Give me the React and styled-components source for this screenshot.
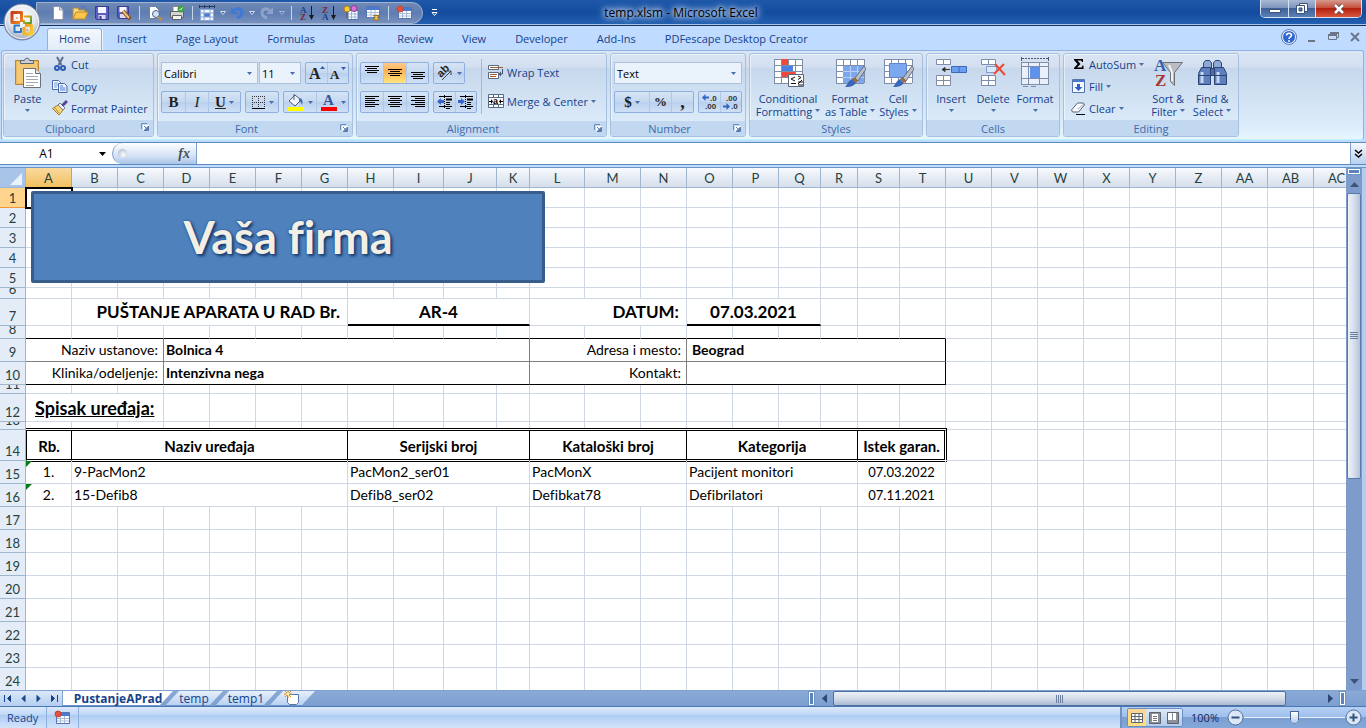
import React, { useState } from "react";
import styled, { createGlobalStyle, css } from "styled-components";

const GlobalStyle = createGlobalStyle`
    * { box-sizing: border-box; }
    html, body { margin: 0; padding: 0; overflow: hidden; }
    body { font-family: "Open Sans", "Noto Sans", sans-serif; font-size: 11px; color: #15428b; }
    button, select, input { font: inherit; color: inherit; margin: 0; padding: 0; border: 0; background: none; }
    button { cursor: pointer; }
`;

const COLS = [
    ["A", 46], ["B", 46], ["C", 46], ["D", 46], ["E", 46], ["F", 46], ["G", 46], ["H", 46],
    ["I", 50], ["J", 53], ["K", 33], ["L", 55], ["M", 56], ["N", 46], ["O", 46], ["P", 46],
    ["Q", 42], ["R", 37], ["S", 42], ["T", 46], ["U", 46], ["V", 46], ["W", 46], ["X", 46],
    ["Y", 46], ["Z", 46], ["AA", 46], ["AB", 46], ["AC", 46],
];

const ROW_HEIGHTS = [20, 20, 20, 20, 20, 11, 27, 13, 23, 23, 9, 28, 8, 31, 23, 23, 23, 23, 23, 23, 23, 23, 23, 23];

// row number -> cells that hold something; everything else is an empty cell
const CELLS = {
    7: [
        { at: 1, span: 6, text: "PUŠTANJE APARATA U RAD Br.", kind: "heading", align: "right" },
        { at: 7, span: 4, text: "AR-4", kind: "field", align: "center" },
        { at: 11, span: 3, text: "DATUM:", kind: "heading", align: "right" },
        { at: 14, span: 3, text: "07.03.2021", kind: "field", align: "center" },
    ],
    9: [
        { at: 0, span: 3, text: "Naziv ustanove:", kind: "label", align: "right" },
        { at: 3, span: 8, text: "Bolnica 4", kind: "value" },
        { at: 11, span: 3, text: "Adresa i mesto:", kind: "label", align: "right" },
        { at: 14, span: 6, text: "Beograd", kind: "value", indent: true, last: true },
    ],
    10: [
        { at: 0, span: 3, text: "Klinika/odeljenje:", kind: "label", align: "right" },
        { at: 3, span: 8, text: "Intenzivna nega", kind: "value" },
        { at: 11, span: 3, text: "Kontakt:", kind: "label", align: "right" },
        { at: 14, span: 6, text: "", kind: "value", indent: true, last: true },
    ],
    12: [{ at: 0, span: 3, text: "Spisak uređaja:", kind: "section" }],
    14: [
        { at: 0, span: 1, text: "Rb.", kind: "head", align: "center", first: true },
        { at: 1, span: 6, text: "Naziv uređaja", kind: "head", align: "center" },
        { at: 7, span: 4, text: "Serijski broj", kind: "head", align: "center" },
        { at: 11, span: 3, text: "Kataloški broj", kind: "head", align: "center" },
        { at: 14, span: 4, text: "Kategorija", kind: "head", align: "center" },
        { at: 18, span: 2, text: "Istek garan.", kind: "head", align: "center", last: true },
    ],
    15: [
        { at: 0, span: 1, text: "1.", kind: "data", align: "center", flag: true },
        { at: 1, span: 6, text: "9-PacMon2", kind: "data" },
        { at: 7, span: 4, text: "PacMon2_ser01", kind: "data" },
        { at: 11, span: 3, text: "PacMonX", kind: "data" },
        { at: 14, span: 4, text: "Pacijent monitori", kind: "data" },
        { at: 18, span: 2, text: "07.03.2022", kind: "date", align: "center" },
    ],
    16: [
        { at: 0, span: 1, text: "2.", kind: "data", align: "center", flag: true },
        { at: 1, span: 6, text: "15-Defib8", kind: "data" },
        { at: 7, span: 4, text: "Defib8_ser02", kind: "data" },
        { at: 11, span: 3, text: "Defibkat78", kind: "data" },
        { at: 14, span: 4, text: "Defibrilatori", kind: "data" },
        { at: 18, span: 2, text: "07.11.2021", kind: "date", align: "center" },
    ],
};

/* ---------- icons ---------- */

const Svg = ({ w = 16, h = 16, children }) => (
    <svg width={w} height={h} viewBox={`0 0 ${w} ${h}`} fill="none" aria-hidden="true">{children}</svg>
);

const Caret = ({ color = "#4a6ea9" }) => (
    <Svg w={5} h={3}><path d="M0 0h5L2.5 3z" fill={color} /></Svg>
);

const QuickCaret = () => (
    <Svg w={6} h={4}><path d="M.5 .5h5L3 3.500z" fill="#4a669a" stroke="#d3dff0" /></Svg>
);

const NewIcon = () => (
    <Svg><path d="M3.5 1.500h6l3.5 3.500v9.500h-9.500z" fill="#fff" stroke="#8a94a8" /><path d="M9.500 1.500v3.500h3.500" fill="#dfe6f0" stroke="#8a94a8" /></Svg>
);
const OpenIcon = () => (
    <Svg>
        <path d="M1 14V3h5l1 2h6v3" fill="#f5d98a" stroke="#b98a2b" />
        <path d="M1 14l3-7h12l-3 7z" fill="#ffc64a" stroke="#b98a2b" />
        <path d="M9 2c3-1.500 5 0 5 2" stroke="#3b6fc4" />
    </Svg>
);
const SaveIcon = () => (
    <Svg>
        <path d="M1.500 1.500h13v13h-12l-1-1z" fill="#5a5fc0" stroke="#373b91" />
        <path d="M4 2h8v6H4z" fill="#f6f7ff" /><path d="M4.500 10h7v4h-7z" fill="#d9dcf2" /><path d="M5.500 11h2v3h-2z" fill="#373b91" />
    </Svg>
);
const SaveAsIcon = () => (
    <Svg>
        <path d="M1.500 1.500h11v12h-10l-1-1z" fill="#5a5fc0" stroke="#373b91" />
        <path d="M3.500 2h7v5h-7z" fill="#f6f7ff" /><path d="M4 9h6v4H4z" fill="#d9dcf2" />
        <path d="M7 6l7 8" stroke="#7a4a12" strokeWidth="4" /><path d="M7 6l6 7" stroke="#f2c07a" strokeWidth="2" />
    </Svg>
);
const PreviewIcon = () => (
    <Svg>
        <path d="M2.500 1.500h6l3.500 3.500v8.500h-9.500z" fill="#fff" stroke="#6e7f9f" />
        <circle cx="9" cy="9" r="3.500" fill="#cfe2f7" stroke="#4b5f86" /><path d="M11.500 12l3 3" stroke="#d08a2a" strokeWidth="2" />
    </Svg>
);
const PrintIcon = () => (
    <Svg>
        <path d="M4 1.500h8v5H4z" fill="#fff" stroke="#888" />
        <path d="M1.500 6.500h13v6h-13z" fill="#d4d4cf" stroke="#5e6168" /><path d="M3.500 10.500h9v4h-9z" fill="#f3f3ee" stroke="#5e6168" />
        <circle cx="12" cy="4" r="3.500" fill="#3fa142" /><path d="M10.500 4l1 1 2-2.500" stroke="#fff" />
    </Svg>
);
const GridSizeIcon = () => (
    <Svg w={18}>
        <path d="M1 1.500h15M1.500 0v3M6.500 0v3M11.500 0v3M16.500 0v3" stroke="#25395f" />
        <path d="M2 4h14v12H2z" fill="#f4f8ff" /><path d="M6 8h6v4H6z" fill="#4a79cf" />
        <path d="M2 4.500h14M2 8h14M2 12h14M2 15.500h14M2.500 4v12M6 4v12M12 4v12M15.500 4v12" stroke="#8ba6d3" />
    </Svg>
);
const UndoIcon = ({ color = "#3f78d6", flip }) => (
    <Svg><g transform={flip ? "matrix(-1 0 0 1 16 0)" : undefined}>
        <path d="M5 6c4-4 8-2 8 2 0 3-2 4-5 5" stroke={color} strokeWidth="3" /><path d="M2 2v7h7z" fill={color} />
    </g></Svg>
);
const SortIcon = ({ top, bottom, topColor, bottomColor }) => (
    <Svg>
        <g fontFamily="Liberation Serif, serif" fontSize="9" fontWeight="bold">
            <text x="1" y="8" fill={topColor}>{top}</text><text x="1" y="15" fill={bottomColor}>{bottom}</text>
        </g>
        <path d="M12.500 1v11" stroke="#1b1b1b" /><path d="M10 10h5l-2.500 5z" fill="#1b1b1b" />
    </Svg>
);
const BalloonsIcon = () => (
    <Svg>
        <path d="M5 5.500h10v9H5z" fill="#fff" stroke="#5874ad" /><path d="M5 9h10M5 12h10M8.500 6v8M12 6v8" stroke="#9db3da" />
        <path d="M4 7v6" stroke="#555" /><circle cx="4" cy="4" r="3" fill="#ffca3a" stroke="#b17a12" /><circle cx="11" cy="3.500" r="3" fill="#d873d8" stroke="#8a3a94" />
    </Svg>
);
const TableIcon = () => (
    <Svg>
        <path d="M1.500 1.500h13v11h-13z" fill="#fff" stroke="#5874ad" /><path d="M1 2h14v3H1z" fill="#4a79cf" />
        <path d="M2 7.500h12M2 10h12M6 5v8M10 5v8" stroke="#a9bbdc" /><path d="M8.500 10.500h6l-2 2 2 2.500h-6l1.500-2.500z" fill="#f0c25a" stroke="#9a7220" />
    </Svg>
);
const RecordIcon = () => (
    <Svg>
        <path d="M2.500 2.500h13v11h-13z" fill="#fff" stroke="#5874ad" /><path d="M3 3h12v3H3z" fill="#4a79cf" />
        <path d="M3 8.500h12M3 11h12M6.500 6v7M10.500 6v7" stroke="#a9bbdc" /><circle cx="4" cy="4" r="3" fill="#e8503a" stroke="#c2452f" />
    </Svg>
);
const MoreIcon = () => (
    <Svg w={7} h={8}><path d="M1 .5h5" stroke="#fff" /><path d="M1 3.500h5L3.500 6.500z" stroke="#fff" /></Svg>
);
const OfficeLogo = () => (
    <Svg w={38} h={38}>
        <defs>
            <radialGradient id="orb" cx=".5" cy=".35" r=".65">
                <stop offset="0" stopColor="#fff" /><stop offset=".6" stopColor="#e1e5ec" /><stop offset="1" stopColor="#98a6bd" />
            </radialGradient>
            <linearGradient id="red" x1="0" y1="0" x2="1" y2="1"><stop stopColor="#c9381b" /><stop offset="1" stopColor="#f08a1c" /></linearGradient>
            <linearGradient id="green" x1="0" y1="0" x2="1" y2="1"><stop stopColor="#f2a51e" /><stop offset="1" stopColor="#4e9f2f" /></linearGradient>
            <linearGradient id="gold" x1="0" y1="0" x2="1" y2="1"><stop stopColor="#f39a1b" /><stop offset="1" stopColor="#f9cf2c" /></linearGradient>
        </defs>
        <circle cx="19" cy="19" r="18" fill="url(#orb)" stroke="#6d7f9f" /><circle cx="19" cy="19" r="16.500" stroke="#fff" strokeOpacity=".8" />
        <g strokeLinejoin="round">
            <path d="M17 19.500H9v-10h9.500V19" stroke="url(#red)" strokeWidth="3" />
            <path d="M21 13.500h7v6.500h-7v-3" stroke="url(#green)" strokeWidth="2" />
            <path d="M18 25v4h-6.500v-6.500H17" stroke="#2e78c9" strokeWidth="2" />
            <path d="M22 22.500h6.500V31H21v-7" stroke="url(#gold)" strokeWidth="3" />
        </g>
        <path d="M14 14v2M24 26v2" stroke="#e3762a" />
    </Svg>
);

const PasteIcon = () => (
    <Svg w={32} h={32}>
        <path d="M3.500 3.500h23v24h-23z" fill="#eab75d" stroke="#b5853a" /><path d="M5 5h20v21H5z" fill="#f3c877" />
        <path d="M8.500 6.500v-3h4c0-3 5-3 5 0h4v3z" fill="#c9ced6" stroke="#5c6470" />
        <path d="M11.500 11.500h12l5 5v14h-17z" fill="#fff" stroke="#68727f" /><path d="M23.500 11.500v5h5" fill="#e4e8ee" stroke="#68727f" />
        <path d="M14 16.500h7M14 19.500h12M14 22.500h12M14 25.500h12M14 28.500h8" stroke="#a4a9b0" />
    </Svg>
);
const CutIcon = () => (
    <Svg>
        <path d="M5 1l4.500 8M11 1L6.500 9" stroke="#5c6f8f" strokeWidth="2" />
        <circle cx="5" cy="12" r="2" stroke="#2c5cb4" strokeWidth="2" /><circle cx="11" cy="12" r="2" stroke="#2c5cb4" strokeWidth="2" />
    </Svg>
);
const CopyIcon = () => (
    <Svg>
        <path d="M.5 2.500h6l2 2v7h-8z" fill="#fff" stroke="#4569b0" /><path d="M2 5h4M2 7h5M2 9h3" stroke="#6f94d8" />
        <path d="M6.500 5.500h6l2.500 2.500v6.500H6.500z" fill="#eef4ff" stroke="#4569b0" /><path d="M8 8h3M8 10h5.500M8 12h5.500" stroke="#4a79cf" />
    </Svg>
);
const PainterIcon = () => (
    <Svg>
        <path d="M.5 8.500L6 5l5 5-4 5z" fill="#f3d677" stroke="#a5782a" /><path d="M3 8l4 5" stroke="#b98b32" />
        <path d="M6 5l2-2 5 5-2 2z" fill="#ececf2" stroke="#777d8c" /><path d="M10.500 5.500L15 1" stroke="#55479e" strokeWidth="3" />
    </Svg>
);
const LauncherIcon = () => (
    <Svg w={8} h={8}><path d="M.5 6V.5H6" stroke="#6a8cc0" /><path d="M2 2h6v6H2z" fill="#fff" /><path d="M7.500 3v4.500H3zM3 3l3 3" fill="#587bb0" stroke="#587bb0" /></Svg>
);
const GrowIcon = ({ size, down }) => (
    <Svg w={18} h={18}>
        <text x="1" y="15" fontFamily="Liberation Serif, serif" fontSize={size} fontWeight="bold" fill="#222">A</text>
        <path d={down ? "M12 3h5l-2.500 3z" : "M12 5h5L14.500 2z"} fill="#345da5" />
    </Svg>
);
const BordersIcon = () => (
    <Svg>
        <path d="M2.500 2v11M8.500 2v11M14.500 2v11M2 2.500h13M2 8.500h13" stroke="#333" strokeDasharray="1 1" /><path d="M2 14.500h13" stroke="#000" />
    </Svg>
);
const FillColorIcon = () => (
    <Svg w={18} h={18}>
        <path d="M2 8l6-6 6 5-6 6z" fill="#f3f6fb" stroke="#4c5c7c" /><path d="M7 1v6" stroke="#4c5c7c" /><path d="M12 5c4 0 4 4 3 7-1-2-1-3-3-4z" fill="#3f6fb6" />
        <path d="M1 14h16v4H1z" fill="#ff0" />
    </Svg>
);
const FontColorIcon = () => (
    <Svg w={18} h={18}>
        <text x="3" y="12" fontFamily="Liberation Serif, serif" fontSize="15" fontWeight="bold" fill="#34569c">A</text><path d="M1 14h16v4H1z" fill="#f00" />
    </Svg>
);

const LINES = {
    top: [[1, 2], [3, 4], [1, 6], [3, 8]],
    middle: [[1, 5], [3, 7], [1, 9], [3, 11]],
    bottom: [[1, 8], [3, 10], [1, 12], [3, 14]],
};
const VAlignIcon = ({ at }) => (
    <Svg>{LINES[at].map(([x, y]) => <path key={y} d={`M${x} ${y - 0.5}H${16 - x}`} stroke="#000" />)}</Svg>
);
const HAlignIcon = ({ at }) => (
    <Svg>
        {[1, 3, 5, 7, 9, 11].map((y, i) => {
            const len = i % 2 ? 10 : 14;
            const x = at === "left" ? 1 : at === "right" ? 15 - len : 8 - len / 2;
            return <path key={y} d={`M${x} ${y + 1.5}h${len}`} stroke="#000" />;
        })}
    </Svg>
);
const IndentIcon = ({ out }) => (
    <Svg>
        <path d="M7.500 1v14" stroke="#000" strokeDasharray="1 1" /><path d="M2 2.500h13M9 8.500h4M9 10.500h4M2 12.500h13M9 14.500h4" stroke="#000" /><path d="M9 5.500h6" stroke="#000" strokeWidth="2" />
        <path d={out ? "M0 7.500l4-3.500v2h3v3H4v2z" : "M7 7.500L3 4v2H0v3h3v2z"} fill="#3565c8" />
    </Svg>
);
const OrientationIcon = () => (
    <Svg w={18} h={18}>
        <text x="2" y="11" transform="rotate(-45 7 9)" fontFamily="Liberation Sans, sans-serif" fontSize="11" fontWeight="bold" fill="#222">ab</text>
        <path d="M6 16l9-9M15 7v4M15 7h-4" stroke="#444" />
    </Svg>
);
const WrapIcon = () => (
    <Svg>
        <path d="M.5 1.500h10v4H.5zM.5 8.500h10v6H.5z" fill="#fff" stroke="#596a85" /><path d="M2 3.500h13M2 10.500h7M2 12.500h6" stroke="#a3602e" />
        <path d="M14.500 5v5h-2" stroke="#44526b" /><path d="M13 7.500v5L10.500 10z" fill="#44526b" />
    </Svg>
);
const MergeIcon = () => (
    <Svg>
        <path d="M.5 1.500h15v13H.5z" fill="#fff" stroke="#596a85" /><path d="M0 4.500h16M0 11.500h16M5.500 1v3M10.500 1v3M5.500 12v3M10.500 12v3" stroke="#596a85" />
        <text x="5" y="11" fontFamily="Liberation Sans, sans-serif" fontSize="9" fontWeight="bold" fill="#000">a</text>
        <path d="M1 8.500h3M12 8.500h3" stroke="#000" /><path d="M3 6v5l2-2.500zM13 6v5l-2-2.500z" fill="#000" />
    </Svg>
);
const DecimalIcon = ({ less }) => (
    <Svg w={18} h={18}>
        <g fontFamily="Liberation Sans, sans-serif" fontSize="8" fontWeight="bold" fill="#333">
            <text x={less ? 4 : 9} y="8">{less ? ".00" : ".0"}</text><text x={less ? 9 : 4} y="16">{less ? ".0" : ".00"}</text>
        </g>
        <path d={less ? "M8 13.500L4.500 10v2.500H1v2h3.500V17z" : "M1 4.500L4.500 1v2.500H8v2H4.500V8z"} fill="#3565c8" />
    </Svg>
);

const GridBase = ({ x = 2, y = 2, w = 28, h = 24, step = 7 }) => {
    const lines = [];
    for (let i = x; i <= x + w; i += step) lines.push(`M${i + 0.5} ${y}v${h}`);
    for (let j = y; j <= y + h; j += 6) lines.push(`M${x} ${j + 0.5}h${w}`);
    return <><path d={`M${x} ${y}h${w}v${h}h-${w}z`} fill="#fff" /><path d={lines.join("")} stroke="#7f8ea8" /></>;
};
const Brush = () => (
    <>
        <path d="M30 9l-9 12 3 3L32 12z" fill="#b9bec8" stroke="#646c7a" /><path d="M20 20l4 4-2 2-4-4z" fill="#a06a3a" />
        <path d="M18 22l4 4c-3 4-7 4-11 4 3-3 3-6 7-8z" fill="#3a67b4" />
    </>
);
const ConditionalIcon = () => (
    <Svg w={32} h={32}>
        <GridBase />
        <path d="M10 2h6v6h-6zM10 15h13v5H10z" fill="#f0493a" /><path d="M10 9h11v5H10z" fill="#4b7fe0" />
        <path d="M16.500 17.500h15v12h-15z" fill="#fff" stroke="#5b6577" />
        <path d="M23 20l-4 2 4 2M19 26.500h5M26 19l3 1.500-3 2M26 25h5M26 28h5M30 23l-4 4" stroke="#111" />
    </Svg>
);
const FormatTableIcon = () => (
    <Svg w={32} h={32}><GridBase /><path d="M9 9h21v17H9z" fill="#7ba7ef" /><path d="M16.500 9v17M23.500 9v17M9 14.500h21M9 20.500h21" stroke="#b9d0f7" /><Brush /></Svg>
);
const CellStylesIcon = () => (
    <Svg w={32} h={32}><GridBase /><path d="M7.500 6.500h17v14h-17z" fill="#7ba7ef" stroke="#5d86cc" /><Brush /></Svg>
);
const InsertCellsIcon = () => (
    <Svg w={32} h={32}>
        <path d="M1.500 2.500h14v5h-14zM8.500 2.500v5M1.500 18.500h14v10h-14zM8.500 18.500v10M1.500 23.500h14" fill="#fff" stroke="#7f8ea8" />
        <path d="M16.500 9.500h15v6h-15zM24 9.500v6" fill="#6c9df0" stroke="#3c69b8" /><path d="M8 12.500h7M7 12.500l3-2v4z" fill="#333" stroke="#333" />
    </Svg>
);
const DeleteCellsIcon = () => (
    <Svg w={32} h={32}>
        <path d="M4.500 2.500h14v5h-14zM11.500 2.500v5M4.500 18.500h14v10h-14zM11.500 18.500v10M4.500 23.500h14" fill="#fff" stroke="#7f8ea8" />
        <path d="M9.500 9.500h10v6h-10z" fill="#dbe8fb" stroke="#2d57a5" strokeDasharray="1 1" /><path d="M18 7l10 11M27 7l-10 10" stroke="#ee4a32" strokeWidth="2" />
    </Svg>
);
const FormatCellsIcon = () => (
    <Svg w={32} h={32}>
        <path d="M3 1.500h26" stroke="#4b5870" strokeDasharray="2 1" /><path d="M2.500 0v4M29.500 0v4" stroke="#4b5870" />
        <path d="M2 5h28v23H2z" fill="#e9f0fb" /><path d="M2.500 5v23M9.500 5v23M20.500 5v23M29.500 5v23M2 5.500h28M2 9.500h28M2 21.500h28M2 27.500h28" stroke="#7f8ea8" />
        <path d="M11 10h9v11h-9z" fill="#5f92ea" /><path d="M4 29.500h5M12 29.500h5" stroke="#7f8ea8" />
    </Svg>
);
const SigmaIcon = () => (
    <Svg><path d="M4 3h9v3h-1l-1-1.500H7.500L10.500 8 7 11.500h4.500l1-2h1V13H4v-1l3.500-4L4 4z" fill="#000" /></Svg>
);
const FillDownIcon = () => (
    <Svg><path d="M2.500 1.500h12v13h-12z" fill="#f4f8ff" stroke="#5874ad" /><path d="M3 2h11v2H3z" fill="#4a79cf" /><path d="M7 6h3v3h2.500l-4 4-4-4H7z" fill="#2c62c8" /></Svg>
);
const EraserIcon = () => (
    <Svg><path d="M1.500 10l6-7h6l1 2-6 7h-6z" fill="#f6f8fc" stroke="#5b6577" /><path d="M8 9l6-5" stroke="#a0a8b8" /><path d="M6 14.500h9" stroke="#000" /></Svg>
);
const SortFilterIcon = () => (
    <Svg w={32} h={32}>
        <g fontFamily="Liberation Serif, serif" fontSize="17" fontWeight="bold"><text x="2" y="14" fill="#3263b0">A</text><text x="3" y="29" fill="#a33b35">Z</text></g>
        <path d="M10.500 5.500h20l-8 10v13l-4-4v-9z" fill="#b9bcc1" stroke="#6d7076" /><path d="M17 8l3 7v9" stroke="#f0f1f3" strokeWidth="2" />
    </Svg>
);
const FindIcon = () => (
    <Svg w={32} h={32}>
        <g stroke="#2b4474">
            <path d="M7.500 9V6l2-2.500h4L15.500 6v6h-8zM17.500 12V6l2-2.500h4l2 2.500v6z" fill="#8fa9d6" /><path d="M13.500 11.500h6v7h-6z" fill="#4d6ba4" />
            <path d="M5.500 10.500h9v17h-12v-11zM18.500 10.500h9l3 6v11h-12z" fill="#5d7fbd" />
        </g>
        <path d="M6 15v11M22 15v11" stroke="#c6d6f0" strokeWidth="3" /><path d="M3 18.500h11M19 18.500h11" stroke="#2b4474" />
    </Svg>
);
const HelpIcon = () => (
    <Svg><circle cx="8" cy="8" r="6.500" fill="#2f66d4" stroke="#fff" /><circle cx="8" cy="8" r="7.500" stroke="#5b7db8" />
        <path d="M5.500 6.500c0-3 5-3 5 0 0 1.500-2.500 1.500-2.500 3.500M8 11v2" stroke="#fff" strokeWidth="1.500" /></Svg>
);
const SheetNewIcon = () => (
    <Svg><path d="M3.500 4.500h11v8l-2 2h-7l-2-2z" fill="#fff" stroke="#5874ad" /><path d="M4 0v8M0 4h8M1 1l6 6M7 1L1 7" stroke="#e58a1f" /><circle cx="4" cy="4" r="1.500" fill="#fff3a0" /></Svg>
);

/* ---------- title bar ---------- */

const Window = styled.div`
    display: flex;
    flex-direction: column;
    height: 100vh;
    background: #bfdbff;
    overflow: hidden;
`;

const TitleBar = styled.header`
    position: relative;
    display: grid;
    grid-template-columns: 1fr auto 1fr;
    height: 26px;
    flex: none;
    padding-right: 4px;
    background: linear-gradient(#1f57a9, #144c9f 50%, #2460b2);
    border-bottom: 1px solid #14315f;
    box-shadow: inset 0 -1px #a9c4e8;
`;

const OfficeButton = styled.button`
    position: absolute;
    left: 3px;
    top: 3px;
    width: 38px;
    height: 38px;
    z-index: 2;
`;

const QuickAccess = styled.div`
    display: flex;
    align-items: center;
    gap: 8px;
`;

const QuickPill = styled.div`
    display: flex;
    align-items: center;
    height: 22px;
    margin-left: 36px;
    padding: 0 7px 0 10px;
    border: 1px solid #9fb2d2;
    border-radius: 0 11px 11px 0;
    background: linear-gradient(#7089b5, #5f7db1 50%, #7791be);
`;

const QuickButton = styled.button`
    display: flex;
    align-items: center;
    justify-content: center;
    gap: 4px;
    width: ${(p) => (p.$drop ? 30 : 22)}px;
    height: 20px;
    opacity: ${(p) => (p.$dim ? 0.6 : 1)};
`;

const QuickRule = styled.span`
    width: 1px;
    height: 14px;
    margin: 0 4px;
    background: #c6d6ec;
`;

const WindowTitle = styled.h1`
    margin: 0;
    font-size: 12px;
    font-weight: 400;
    line-height: 26px;
    color: #000;
    text-shadow: 0 0 4px #c3d3ec, 0 0 6px #c3d3ec, 0 0 8px #a9c0e4, 0 0 10px #a9c0e4;
`;

const WindowButtons = styled.div`
    display: flex;
    justify-self: end;
    height: 18px;
    border: 1px solid #d5e2f3;
    border-top: 0;
    border-radius: 0 0 5px 5px;
    overflow: hidden;
`;

const WindowButton = styled.button`
    display: flex;
    align-items: center;
    justify-content: center;
    width: ${(p) => (p.$close ? 46 : 27)}px;
    background: ${(p) => (p.$close ? "linear-gradient(#d49a90, #c8503c 45%, #b3210f 50%, #d8563c)" : "linear-gradient(#a9b9d4, #7e96be 45%, #3f619a 50%, #5b80b4)")};
    & + & { border-left: 1px solid #d5e2f3; }
`;

/* ---------- tabs ---------- */

const TabBar = styled.nav`
    display: flex;
    flex: none;
    height: 24px;
    padding: 2px 3px 0 47px;
    background: #bfdbff;
`;

const Tab = styled.button`
    height: 23px;
    padding: 0 ${(p) => (p.$active ? 11 : 13)}px 3px;
    margin-right: 1px;
    border: 1px solid transparent;
    border-bottom: 0;
    border-radius: 3px 3px 0 0;
    ${(p) => p.$active && css`
        border-color: #8db2e3;
        background: linear-gradient(#f4f8fe, #e1ebf7);
        box-shadow: 1px 0 #eaf6ff;
    `}
`;

const DocButtons = styled.div`
    display: flex;
    align-items: center;
    gap: 6px;
    height: 18px;
    margin-left: auto;
`;

const DocButton = styled.button`
    display: flex;
    width: 16px;
    height: 16px;
`;

/* ---------- ribbon ---------- */

const Ribbon = styled.section`
    display: flex;
    flex: none;
    gap: 3px;
    height: 90px;
    margin: 0 2px 0 1px;
    padding: 2px 1px;
    border: 1px solid #8db2e3;
    border-bottom-color: #bdf3fb;
    border-radius: 3px;
    background: linear-gradient(#dbe6f4, #d3dff0 18%, #c7d8ed 20%, #dcecfa 85%, #e6f5ff);
`;

const GroupBox = styled.section`
    display: flex;
    flex-direction: column;
    width: ${(p) => p.$w}px;
    border: 1px solid #a6c0de;
    border-radius: 3px;
    box-shadow: inset 1px 1px rgba(255, 255, 255, 0.5);
`;

const GroupBody = styled.div`
    display: flex;
    flex: 1;
    padding: ${(p) => p.$pad || "0 3px"};
    gap: ${(p) => p.$gap || 0}px;
`;

const GroupTitle = styled.h2`
    display: flex;
    align-items: center;
    justify-content: center;
    position: relative;
    margin: 0;
    padding-right: ${(p) => (p.$launcher ? 17 : 0)}px;
    height: 16px;
    font-size: 11px;
    font-weight: 400;
    color: #3e6aaa;
    background: #c1d8f0;
`;

const Launcher = styled.button`
    position: absolute;
    right: 4px;
    top: 3px;
    display: flex;
`;

const BigButton = styled.button`
    display: flex;
    flex-direction: column;
    align-items: center;
    width: ${(p) => p.$w || 42}px;
    padding-top: 3px;
    white-space: nowrap;
    line-height: 13px;
    svg:first-child { margin-bottom: 3px; }
`;

const BigLine = styled.span`
    display: flex;
    align-items: center;
    justify-content: center;
    gap: 3px;
    height: 13px;
`;

const Stack = styled.div`
    display: flex;
    flex-direction: column;
    gap: ${(p) => p.$gap || 0}px;
`;

const SmallButton = styled.button`
    display: flex;
    align-items: center;
    gap: 3px;
    height: 22px;
    padding-bottom: 2px;
    white-space: nowrap;
`;

const Line = styled.div`
    display: flex;
    gap: ${(p) => (p.$tight ? 1 : 4)}px;
`;

const ButtonSet = styled.div`
    display: flex;
    height: 22px;
    border: 1px solid #8fb0de;
    border-radius: 2px;
    background: linear-gradient(#d6e4f5, #c5d8f0 50%, #b9d0ee 52%, #cfe0f5);
`;

const SetButton = styled.button`
    display: flex;
    align-items: center;
    justify-content: center;
    gap: 3px;
    width: ${(p) => p.$w || 22}px;
    color: #222;
    & + & { border-left: 1px solid #b0c8e8; }
    ${(p) => p.$active && css`background: linear-gradient(#fccb8b, #fdb252 40%, #ffe57e);`}
`;

const Glyph = styled.span`
    font-family: "Liberation Serif", serif;
    font-size: ${(p) => p.$size || 15}px;
    font-weight: ${(p) => (p.$light ? 400 : 700)};
    font-style: ${(p) => (p.$italic ? "italic" : "normal")};
    text-decoration: ${(p) => (p.$under ? "underline" : "none")};
`;

const Combo = styled.label`
    position: relative;
    display: flex;
    width: ${(p) => p.$w}px;
    height: 22px;
    border: 1px solid #abc1de;
    background: #eaf2fb;
    select {
        width: 100%;
        padding: 0 2px;
        appearance: none;
        color: #000;
        outline: 0;
    }
    svg {
        position: absolute;
        right: 5px;
        top: 9px;
        pointer-events: none;
    }
`;

const Divider = styled.span`
    width: 1px;
    height: 55px;
    margin: 5px 6px 0 4px;
    background: #9bbbe0;
`;

/* ---------- formula bar ---------- */

const FormulaBar = styled.div`
    display: flex;
    flex: none;
    height: 23px;
    margin-top: 2px;
    border: 1px solid #5b8bc0;
    border-width: 1px 0;
    background: #fff;
`;

const NameBox = styled.label`
    display: flex;
    align-items: center;
    width: 112px;
    padding-right: 6px;
    input {
        flex: 1;
        min-width: 0;
        padding-right: 6px;
        text-align: center;
        color: #000;
        font-size: 12px;
        outline: 0;
    }
`;

const FormulaTools = styled.div`
    display: flex;
    align-items: center;
    justify-content: space-between;
    width: 85px;
    padding: 0 6px 0 5px;
    border: 1px solid #7a9fcb;
    border-width: 0 1px;
    border-radius: 11px 0 0 11px;
    background: linear-gradient(#fdfeff, #d5e3f6 60%, #a9c4e8);
    color: #4a4f5a;
`;

const Knob = styled.span`
    width: 9px;
    height: 9px;
    border-radius: 50%;
    background: radial-gradient(circle at 60% 65%, #fff, #a3b1c6);
`;

const FormulaInput = styled.input`
    flex: 1;
    padding: 0 4px !important;
    outline: 0;
`;

const ExpandButton = styled.button`
    width: 16px;
    display: flex;
    align-items: center;
    justify-content: center;
    border-left: 1px solid #7a9fcb !important;
    background: linear-gradient(#f5f9ff, #b9d0ee) !important;
`;

/* ---------- sheet ---------- */

const Workspace = styled.main`
    display: flex;
    flex: 1;
    min-height: 0;
    margin-top: 2px;
    border-top: 1px solid #6d95c3;
    background: #b4cdee;
    padding-right: 4px;
`;

const SheetView = styled.div`
    position: relative;
    flex: 1;
    min-width: 0;
    overflow: hidden;
    background: #fff;
`;

const Sheet = styled.table`
    table-layout: fixed;
    width: max-content;
    border-collapse: separate;
    border-spacing: 0;
    font-family: Lato, sans-serif;
    font-size: 14px;
    line-height: 16px;
    font-variant-ligatures: none;
    color: #000;
    td, th { padding: 0; }
`;

const ColHead = styled.th`
    height: 20px;
    font-size: 13px;
    font-weight: 400;
    color: #27413e;
    border-right: 1px solid #9eb6ce;
    border-bottom: 1px solid #9eb6ce;
    background: linear-gradient(#f8fafd, #e6ecf4 50%, #d5deea);
    ${(p) => p.$active && css`
        background: linear-gradient(#f9d99f, #f1c15f);
        border-color: #f29536;
    `}
`;

const Corner = styled.th`
    background: #a9c4e9;
    border-right: 1px solid #9eb6ce;
    border-bottom: 1px solid #9eb6ce;
    text-align: right;
    svg { display: block; margin: 3px 3px 0 auto; }
`;

const RowHead = styled.th`
    font-size: 13px;
    font-weight: 400;
    color: #27413e;
    background: #e4ecf7;
    border-right: 1px solid #9eb6ce;
    border-bottom: 1px solid #9eb6ce;
    ${(p) => p.$active && css`background: #ffd58d; border-color: #f29536;`}
`;

const RowNumber = styled.div`
    display: flex;
    align-items: flex-end;
    justify-content: center;
    height: ${(p) => p.$h - 1}px;
    overflow: hidden;
    line-height: 18px;
`;

const kinds = {
    heading: css`font-size: 17px; font-weight: 700; padding-right: 7px !important;`,
    field: css`font-size: 17px; font-weight: 700; border-bottom: 2px solid #000;`,
    label: css`padding-right: 5px !important; border-right-color: #7f7f7f; border-bottom-color: #7f7f7f;`,
    value: css`font-weight: 700; padding-left: 2px !important; border-right-color: #7f7f7f; border-bottom-color: #7f7f7f;`,
    section: css`font-size: 18px; font-weight: 700; text-decoration: underline; padding-left: 9px !important;`,
    head: css`
        font-size: 15px;
        font-weight: 700;
        border-top: 1px solid #000;
        border-right-color: #000;
        border-bottom-color: #fff;
        box-shadow: 0 -1px #fff, 0 -2px #000, 0 1px #000, inset 0 -1px #000;
    `,
    data: css`padding: 0 2px !important;`,
    date: css`font-size: 13px;`,
};

const Cell = styled.td`
    position: relative;
    border-right: 1px solid #d0d7e5;
    border-bottom: 1px solid #d0d7e5;
    text-align: ${(p) => p.$align || "left"};
    white-space: nowrap;
    ${(p) => kinds[p.$kind]}
    ${(p) => p.$rule && css`border-bottom-color: #000;`}
    ${(p) => p.$indent && css`padding-left: 5px !important;`}
    ${(p) => p.$last && css`border-right-color: #000;`}
    ${(p) => p.$last && p.$kind === "head" && css`
        border-right-color: #fff;
        box-shadow: 0 -1px #fff, 0 -2px #000, 1px -2px #000, 1px 1px #000, 0 1px #000, inset -1px -1px #000;
    `}
    ${(p) => p.$first && css`border-left: 1px solid #000;`}
    ${(p) => p.$flag && css`
        &::before {
            content: "";
            position: absolute;
            left: 0;
            top: 0;
            border: 3px solid;
            border-color: #0a7a18 transparent transparent #0a7a18;
        }
    `}
    ${(p) => p.$selected && css`outline: 2px solid #000; outline-offset: -1px;`}
`;

const Banner = styled.div`
    position: absolute;
    left: 31px;
    top: 23px;
    width: 514px;
    height: 92px;
    display: flex;
    align-items: center;
    justify-content: center;
    border: 3px solid #385d8a;
    border-radius: 2px;
    background: #4f81bd;
    font-family: Lato, sans-serif;
    font-size: 45px;
    font-weight: 700;
    font-variant-ligatures: none;
    color: #f3efe4;
    text-shadow: 0 0 1px #1f4e94, 0 0 2px #1f4e94, 2px 2px 3px #17365d;
`;

const VScroll = styled.div`
    display: flex;
    flex-direction: column;
    align-items: stretch;
    width: 16px;
    padding: 0 1px;
    background: #7d9ccb;
`;

const ScrollArrow = styled.button`
    display: flex;
    flex: none;
    align-items: center;
    justify-content: center;
    width: ${(p) => (p.$wide ? 18 : 14)}px;
    height: ${(p) => (p.$wide ? 15 : 18)}px;
`;

const Splitter = styled.span`
    flex: none;
    width: ${(p) => (p.$upright ? 7 : 14)}px;
    height: ${(p) => (p.$upright ? 15 : 7)}px;
    border: 2px solid #fff;
    outline: 1px solid #6d95c3;
    outline-offset: -1px;
    background: #5d83b8;
`;

const VThumb = styled.div`
    flex: 62;
    display: flex;
    align-items: center;
    justify-content: center;
    border: 1px solid #5b7ab0;
    border-radius: 2px;
    background: linear-gradient(90deg, #eef2f8, #d7dfeb 50%, #b4c3da);
`;

const VSpace = styled.div`
    flex: 42;
`;

/* ---------- bottom bars ---------- */

const SheetBar = styled.div`
    display: flex;
    flex: none;
    height: 17px;
    padding-right: 20px;
    border-top: 1px solid #7fa2d0;
    border-bottom: 1px solid #4a78b5;
    background: linear-gradient(#8aa9d6, #7c9fd0);
`;

const SheetNav = styled.div`
    display: flex;
    width: 63px;
    background: linear-gradient(#dbe8fa, #b4cef0);
    border-right: 1px solid #7fa2d0;
`;

const NavButton = styled.button`
    display: flex;
    align-items: center;
    justify-content: center;
    flex: 1;
`;

const SheetTab = styled.button`
    width: ${(p) => p.$w}px;
    margin-right: -8px;
    display: flex;
    align-items: center;
    justify-content: center;
    font-size: 12px;
    line-height: 15px;
    clip-path: polygon(${(p) => (p.$active ? "0 0" : "14px 0")}, 100% 0, calc(100% - 14px) 100%, 0 100%);
    background: ${(p) => (p.$active ? "#fff" : "linear-gradient(#e6f0fc, #b9d2f2)")};
    font-weight: ${(p) => (p.$active ? 700 : 400)};
    border-bottom: 1px solid #6f94c9;
`;

const TabsArea = styled.div`
    display: flex;
    flex: 808;
`;

const HScroll = styled.div`
    display: flex;
    flex: 538;
`;

const HThumb = styled.div`
    flex: 452;
    display: flex;
    align-items: center;
    justify-content: center;
    border: 1px solid #4f6f9f;
    border-radius: 2px;
    background: linear-gradient(#eef2f8, #d3dce9 50%, #a9bad3);
`;

const HSpace = styled.div`
    flex: 35;
`;

const StatusBar = styled.footer`
    display: flex;
    flex: none;
    height: 21px;
    background: linear-gradient(#dbe8fa, #c2d9f7 35%, #aecdf5 40%, #d3e4f9);
`;

const StatusCell = styled.div`
    display: flex;
    align-items: center;
    padding: 0 8px 0 7px;
    border-right: 1px solid #8fb0dc;
`;

const StatusRight = styled.div`
    display: flex;
    align-items: center;
    width: 246px;
    margin-left: auto;
    padding: 0 4px 0 5px;
    border-left: 2px solid #7193c4;
    background: linear-gradient(#b6d0f3, #9fc0ed 45%, #7c9fd0 50%, #84a8da);
    color: #10255a;
`;

const ViewSet = styled.div`
    display: flex;
    border: 1px solid #6a8dc3;
    border-radius: 2px;
`;

const ViewButton = styled.button`
    display: flex;
    align-items: center;
    justify-content: center;
    width: 18px;
    height: 17px;
    background: ${(p) => (p.$active ? "linear-gradient(#fcd597, #ffdf7c)" : "linear-gradient(#dde9f8, #b3cbea)")};
`;

const ZoomText = styled.button`
    width: 44px;
    text-align: center;
`;

const ZoomButton = styled.button`
    display: flex;
    width: 17px;
    height: 17px;
`;

const ZoomRange = styled.input`
    flex: 1;
    min-width: 0;
    height: 17px;
    appearance: none;
    &::-webkit-slider-runnable-track { height: 1px; background: #eaf2fd; }
    &::-webkit-slider-thumb {
        appearance: none;
        width: 9px;
        height: 13px;
        margin-top: -6px;
        border: 1px solid #4c6796;
        background: linear-gradient(#fff, #b6cbe9);
        clip-path: polygon(0 0, 100% 0, 100% 65%, 50% 100%, 0 65%);
    }
`;

const Group = ({ title, w, pad, gap, launcher, children }) => (
    <GroupBox $w={w}>
        <GroupBody $pad={pad} $gap={gap}>{children}</GroupBody>
        <GroupTitle $launcher={launcher}>
            {title}
            {launcher && <Launcher aria-label={`${title} options`}><LauncherIcon /></Launcher>}
        </GroupTitle>
    </GroupBox>
);

const Big = ({ icon, lines, w }) => (
    <BigButton $w={w}>
        {icon}
        {lines.map((line, i) => (
            <BigLine key={i}>{line}{i === lines.length - 1 && <Caret />}</BigLine>
        ))}
    </BigButton>
);

const Select = ({ w, value, label }) => (
    <Combo $w={w}>
        <select aria-label={label} defaultValue={value}><option>{value}</option></select>
        <Caret />
    </Combo>
);

const ZoomIcon = ({ plus }) => (
    <Svg w={17} h={17}>
        <circle cx="8.500" cy="8.500" r="7.500" fill="#dbe7f7" stroke="#56729f" /><path d="M4.500 8.500h8" stroke="#33507f" strokeWidth="2" />
        {plus && <path d="M8.500 4.500v8" stroke="#33507f" strokeWidth="2" />}
    </Svg>
);

const NAV_ICONS = [
    ["First sheet", "M1.500 1v7M7.500 1.500v6l-3-3z"],
    ["Previous sheet", "M6 1.500v6l-3-3z"],
    ["Next sheet", "M3 1.500v6l3-3z"],
    ["Last sheet", "M7.500 1v7M1.500 1.500v6l3-3z"],
];

const TABS = ["Home", "Insert", "Page Layout", "Formulas", "Data", "Review", "View", "Developer", "Add-Ins", "PDFescape Desktop Creator"];

const SheetRow = ({ number, height }) => {
    const filled = CELLS[number] || [];
    const cells = [];
    let col = 0;
    while (col < COLS.length) {
        const found = filled.find((c) => c.at === col);
        if (found) {
            cells.push(
                <Cell
                    key={col}
                    colSpan={found.span}
                    $kind={found.kind}
                    $align={found.align}
                    $indent={found.indent}
                    $first={found.first}
                    $last={found.last}
                    $flag={found.flag}
                    $rule={number === 10}
                >
                    {found.text}
                </Cell>
            );
            col += found.span;
        } else {
            cells.push(<Cell key={col} $rule={number === 8 && col < 20} $selected={number === 1 && col === 0} />);
            col += 1;
        }
    }
    return (
        <tr style={{ height }}>
            <RowHead scope="row" $active={number === 1}><RowNumber $h={height}>{number}</RowNumber></RowHead>
            {cells}
        </tr>
    );
};

const App = () => {
    const [activeTab, setActiveTab] = useState("Home");
    const [sheet, setSheet] = useState("PustanjeAPrad");
    const [zoom, setZoom] = useState(100);

    return (
        <Window>
            <GlobalStyle />
            <TitleBar>
                <OfficeButton aria-label="Office"><OfficeLogo /></OfficeButton>
                <QuickAccess>
                    <QuickPill>
                        <QuickButton aria-label="New"><NewIcon /></QuickButton>
                        <QuickButton aria-label="Open"><OpenIcon /></QuickButton>
                        <QuickButton aria-label="Save"><SaveIcon /></QuickButton>
                        <QuickButton aria-label="Save as"><SaveAsIcon /></QuickButton>
                        <QuickRule />
                        <QuickButton aria-label="Preview"><PreviewIcon /></QuickButton>
                        <QuickButton aria-label="Print"><PrintIcon /></QuickButton>
                        <QuickRule />
                        <QuickButton $drop aria-label="Cells"><GridSizeIcon /><QuickCaret /></QuickButton>
                        <QuickButton $drop aria-label="Undo"><UndoIcon /><QuickCaret /></QuickButton>
                        <QuickButton $drop $dim aria-label="Redo"><UndoIcon color="#a9b9d6" flip /><QuickCaret /></QuickButton>
                        <QuickRule />
                        <QuickButton aria-label="Sort ascending"><SortIcon top="A" bottom="Z" topColor="#1c3f86" bottomColor="#7c2430" /></QuickButton>
                        <QuickButton aria-label="Sort descending"><SortIcon top="Z" bottom="A" topColor="#7c2430" bottomColor="#1c3f86" /></QuickButton>
                        <QuickButton aria-label="Custom"><BalloonsIcon /></QuickButton>
                        <QuickButton aria-label="Table"><TableIcon /></QuickButton>
                        <QuickRule />
                        <QuickButton aria-label="Record macro"><RecordIcon /></QuickButton>
                    </QuickPill>
                    <MoreIcon />
                </QuickAccess>
                <WindowTitle>temp.xlsm - Microsoft Excel</WindowTitle>
                <WindowButtons>
                    <WindowButton aria-label="Minimize"><Svg w={14} h={12}><path d="M1.500 6.500h11v3h-11z" fill="#fff" stroke="#3d5377" /></Svg></WindowButton>
                    <WindowButton aria-label="Restore">
                        <Svg w={14} h={12}>
                            <path d="M4.500 .5h8v8h-8z" fill="#fff" stroke="#3d5377" /><path d="M1.500 2.500h8v8h-8z" fill="#fff" stroke="#3d5377" /><path d="M4 5h3v3H4z" fill="#5b80b4" stroke="#3d5377" />
                        </Svg>
                    </WindowButton>
                    <WindowButton $close aria-label="Close">
                        <Svg w={14} h={12}><path d="M3 2l8 8M11 2l-8 8" stroke="#5c3a44" strokeWidth="4" /><path d="M3 2l8 8M11 2l-8 8" stroke="#fff" strokeWidth="2.500" /></Svg>
                    </WindowButton>
                </WindowButtons>
            </TitleBar>

            <TabBar>
                {TABS.map((tab) => (
                    <Tab key={tab} $active={tab === activeTab} onClick={() => setActiveTab(tab)}>{tab}</Tab>
                ))}
                <DocButtons>
                    <DocButton aria-label="Help"><HelpIcon /></DocButton>
                    <DocButton aria-label="Minimize workbook"><Svg><path d="M5 12h7" stroke="#6a7686" strokeWidth="2" /></Svg></DocButton>
                    <DocButton aria-label="Restore workbook"><Svg><path d="M5.500 3.500h8v5h-2M3.500 5.500h8v5h-8z" stroke="#6a7686" /><path d="M5 4h9M3 6h9" stroke="#6a7686" strokeWidth="2" /></Svg></DocButton>
                    <DocButton aria-label="Close workbook"><Svg><path d="M4 4l8 8M12 4l-8 8" stroke="#6a7686" strokeWidth="2" /></Svg></DocButton>
                </DocButtons>
            </TabBar>

            <Ribbon>
                <Group title="Clipboard" w={151} pad="0 1px" gap={2} launcher>
                    <Big icon={<PasteIcon />} lines={["Paste", ""]} w={45} />
                    <Stack>
                        <SmallButton><CutIcon />Cut</SmallButton>
                        <SmallButton><CopyIcon />Copy</SmallButton>
                        <SmallButton><PainterIcon />Format Painter</SmallButton>
                    </Stack>
                </Group>
                <Group title="Font" w={196} pad="8px 3px" launcher>
                    <Stack $gap={7}>
                        <Line>
                            <Line $tight>
                                <Select w={97} value="Calibri" label="Font name" />
                                <Select w={42} value="11" label="Font size" />
                            </Line>
                            <ButtonSet>
                                <SetButton $w={21} aria-label="Grow font"><GrowIcon size={16} /></SetButton>
                                <SetButton $w={21} aria-label="Shrink font"><GrowIcon size={13} down /></SetButton>
                            </ButtonSet>
                        </Line>
                        <Line>
                            <ButtonSet>
                                <SetButton $w={23} aria-label="Bold"><Glyph>B</Glyph></SetButton>
                                <SetButton $w={23} aria-label="Italic"><Glyph $italic $light>I</Glyph></SetButton>
                                <SetButton $w={32} aria-label="Underline"><Glyph $under>U</Glyph><Caret /></SetButton>
                            </ButtonSet>
                            <ButtonSet>
                                <SetButton $w={32} aria-label="Borders"><BordersIcon /><Caret /></SetButton>
                            </ButtonSet>
                            <ButtonSet>
                                <SetButton $w={32} aria-label="Fill color"><FillColorIcon /><Caret /></SetButton>
                                <SetButton $w={32} aria-label="Font color"><FontColorIcon /><Caret /></SetButton>
                            </ButtonSet>
                        </Line>
                    </Stack>
                </Group>
                <Group title="Alignment" w={251} pad="0 3px" launcher>
                    <GroupBody $pad="8px 0">
                        <Stack $gap={7}>
                            <Line>
                                <ButtonSet>
                                    <SetButton aria-label="Top align"><VAlignIcon at="top" /></SetButton>
                                    <SetButton $w={23} $active aria-label="Middle align"><VAlignIcon at="middle" /></SetButton>
                                    <SetButton aria-label="Bottom align"><VAlignIcon at="bottom" /></SetButton>
                                </ButtonSet>
                                <ButtonSet>
                                    <SetButton $w={30} aria-label="Orientation"><OrientationIcon /><Caret /></SetButton>
                                </ButtonSet>
                            </Line>
                            <Line>
                                <ButtonSet>
                                    <SetButton aria-label="Align left"><HAlignIcon at="left" /></SetButton>
                                    <SetButton $w={23} aria-label="Align center"><HAlignIcon at="center" /></SetButton>
                                    <SetButton aria-label="Align right"><HAlignIcon at="right" /></SetButton>
                                </ButtonSet>
                                <ButtonSet>
                                    <SetButton $w={21} aria-label="Decrease indent"><IndentIcon out /></SetButton>
                                    <SetButton $w={21} aria-label="Increase indent"><IndentIcon /></SetButton>
                                </ButtonSet>
                            </Line>
                        </Stack>
                    </GroupBody>
                    <Divider />
                    <GroupBody $pad="8px 0">
                        <Stack $gap={7}>
                            <SmallButton><WrapIcon />Wrap Text</SmallButton>
                            <SmallButton><MergeIcon />Merge &amp; Center<Caret /></SmallButton>
                        </Stack>
                    </GroupBody>
                </Group>
                <Group title="Number" w={136} pad="8px 3px" launcher>
                    <Stack $gap={7}>
                        <Select w={128} value="Text" label="Number format" />
                        <Line>
                            <ButtonSet>
                                <SetButton $w={34} aria-label="Currency"><Glyph>$</Glyph><Caret /></SetButton>
                                <SetButton aria-label="Percent"><Glyph $size={13}>%</Glyph></SetButton>
                                <SetButton aria-label="Comma"><Glyph $size={18}>,</Glyph></SetButton>
                            </ButtonSet>
                            <ButtonSet>
                                <SetButton $w={21} aria-label="Increase decimal"><DecimalIcon /></SetButton>
                                <SetButton $w={21} aria-label="Decrease decimal"><DecimalIcon less /></SetButton>
                            </ButtonSet>
                        </Line>
                    </Stack>
                </Group>
                <Group title="Styles" w={174}>
                    <Big icon={<ConditionalIcon />} lines={["Conditional", "Formatting"]} w={70} />
                    <Big icon={<FormatTableIcon />} lines={["Format", "as Table"]} w={54} />
                    <Big icon={<CellStylesIcon />} lines={["Cell", "Styles"]} w={42} />
                </Group>
                <Group title="Cells" w={134}>
                    <Big icon={<InsertCellsIcon />} lines={["Insert", ""]} />
                    <Big icon={<DeleteCellsIcon />} lines={["Delete", ""]} />
                    <Big icon={<FormatCellsIcon />} lines={["Format", ""]} />
                </Group>
                <Group title="Editing" w={176} pad="0 6px" gap={4}>
                    <Stack>
                        <SmallButton><SigmaIcon />AutoSum<Caret /></SmallButton>
                        <SmallButton><FillDownIcon />Fill<Caret /></SmallButton>
                        <SmallButton><EraserIcon />Clear<Caret /></SmallButton>
                    </Stack>
                    <Big icon={<SortFilterIcon />} lines={["Sort &", "Filter"]} w={40} />
                    <Big icon={<FindIcon />} lines={["Find &", "Select"]} w={40} />
                </Group>
            </Ribbon>

            <FormulaBar>
                <NameBox>
                    <input aria-label="Name box" defaultValue="A1" />
                    <Svg w={7} h={4}><path d="M0 0h7L3.500 4z" fill="#000" /></Svg>
                </NameBox>
                <FormulaTools>
                    <Knob />
                    <Glyph $italic $size={14}>fx</Glyph>
                </FormulaTools>
                <FormulaInput aria-label="Formula" />
                <ExpandButton aria-label="Expand formula bar"><Svg w={9} h={9}><path d="M1 1l3.500 3L8 1M1 5l3.500 3L8 5" stroke="#000" strokeWidth="1.500" /></Svg></ExpandButton>
            </FormulaBar>

            <Workspace>
                <SheetView>
                    <Sheet>
                        <colgroup>
                            <col style={{ width: 26 }} />
                            {COLS.map(([name, width]) => <col key={name} style={{ width }} />)}
                        </colgroup>
                        <thead>
                            <tr>
                                <Corner><Svg w={12} h={12}><path d="M12 0v12H0z" fill="#e9f1fb" /></Svg></Corner>
                                {COLS.map(([name]) => <ColHead key={name} scope="col" $active={name === "A"}>{name}</ColHead>)}
                            </tr>
                        </thead>
                        <tbody>
                            {ROW_HEIGHTS.map((height, i) => <SheetRow key={i} number={i + 1} height={height} />)}
                        </tbody>
                    </Sheet>
                    <Banner>Vaša firma</Banner>
                </SheetView>
                <VScroll>
                    <Splitter />
                    <ScrollArrow aria-label="Scroll up"><Svg w={9} h={5}><path d="M0 5h9L4.500 0z" fill="#3d5377" /></Svg></ScrollArrow>
                    <VThumb><Svg w={8} h={8}><path d="M0 .5h8M0 2.500h8M0 4.500h8M0 6.500h8" stroke="#6d7f9f" /></Svg></VThumb>
                    <VSpace />
                    <ScrollArrow aria-label="Scroll down"><Svg w={9} h={5}><path d="M0 0h9L4.500 5z" fill="#3d5377" /></Svg></ScrollArrow>
                </VScroll>
            </Workspace>

            <SheetBar>
                <TabsArea>
                    <SheetNav>
                        {NAV_ICONS.map(([label, d]) => (
                            <NavButton key={label} aria-label={label}><Svg w={9} h={9}><path d={d} fill="#15428b" stroke="#15428b" /></Svg></NavButton>
                        ))}
                    </SheetNav>
                    {[["PustanjeAPrad", 110], ["temp", 58], ["temp1", 62]].map(([name, w]) => (
                        <SheetTab key={name} $w={w} $active={name === sheet} onClick={() => setSheet(name)}>{name}</SheetTab>
                    ))}
                    <SheetTab $w={46} aria-label="Insert sheet"><SheetNewIcon /></SheetTab>
                </TabsArea>
                <HScroll>
                    <Splitter $upright />
                    <ScrollArrow $wide aria-label="Scroll left"><Svg w={5} h={9}><path d="M5 0v9L0 4.500z" fill="#2d4672" /></Svg></ScrollArrow>
                    <HThumb><Svg w={8} h={8}><path d="M.5 0v8M2.500 0v8M4.500 0v8M6.500 0v8" stroke="#6d7f9f" /></Svg></HThumb>
                    <HSpace />
                    <ScrollArrow $wide aria-label="Scroll right"><Svg w={5} h={9}><path d="M0 0v9l5-4.500z" fill="#2d4672" /></Svg></ScrollArrow>
                    <Splitter $upright />
                </HScroll>
            </SheetBar>

            <StatusBar>
                <StatusCell>Ready</StatusCell>
                <StatusCell><RecordIcon /></StatusCell>
                <StatusRight>
                    <ViewSet>
                        <ViewButton $active aria-label="Normal view"><Svg w={14} h={12}><path d="M1.500 1.500h11v9h-11zM5 1v10M9 1v10M1 4.500h12M1 7.500h12" fill="#fff" stroke="#5d6470" /></Svg></ViewButton>
                        <ViewButton aria-label="Page layout"><Svg w={14} h={12}><path d="M1.500 .5h11v11h-11z" fill="#8a919b" stroke="#5d6470" /><path d="M4 2h6v8H4z" fill="#fff" /><path d="M5 4.500h4M5 6.500h4M5 8.500h4" stroke="#777" /></Svg></ViewButton>
                        <ViewButton aria-label="Page break preview"><Svg w={14} h={12}><path d="M1.500 .5h11v11h-11z" fill="#8a919b" stroke="#5d6470" /><path d="M2 1h4v7H2zM7 1h3v7H7z" fill="#fff" /></Svg></ViewButton>
                    </ViewSet>
                    <ZoomText>{zoom}%</ZoomText>
                    <ZoomButton aria-label="Zoom out" onClick={() => setZoom(Math.max(10, zoom - 10))}><ZoomIcon /></ZoomButton>
                    <ZoomRange type="range" aria-label="Zoom" min="0" max="200" value={zoom} onChange={(e) => setZoom(Number(e.target.value))} />
                    <ZoomButton aria-label="Zoom in" onClick={() => setZoom(Math.min(200, zoom + 10))}><ZoomIcon plus /></ZoomButton>
                </StatusRight>
            </StatusBar>
        </Window>
    );
};

export default App;
